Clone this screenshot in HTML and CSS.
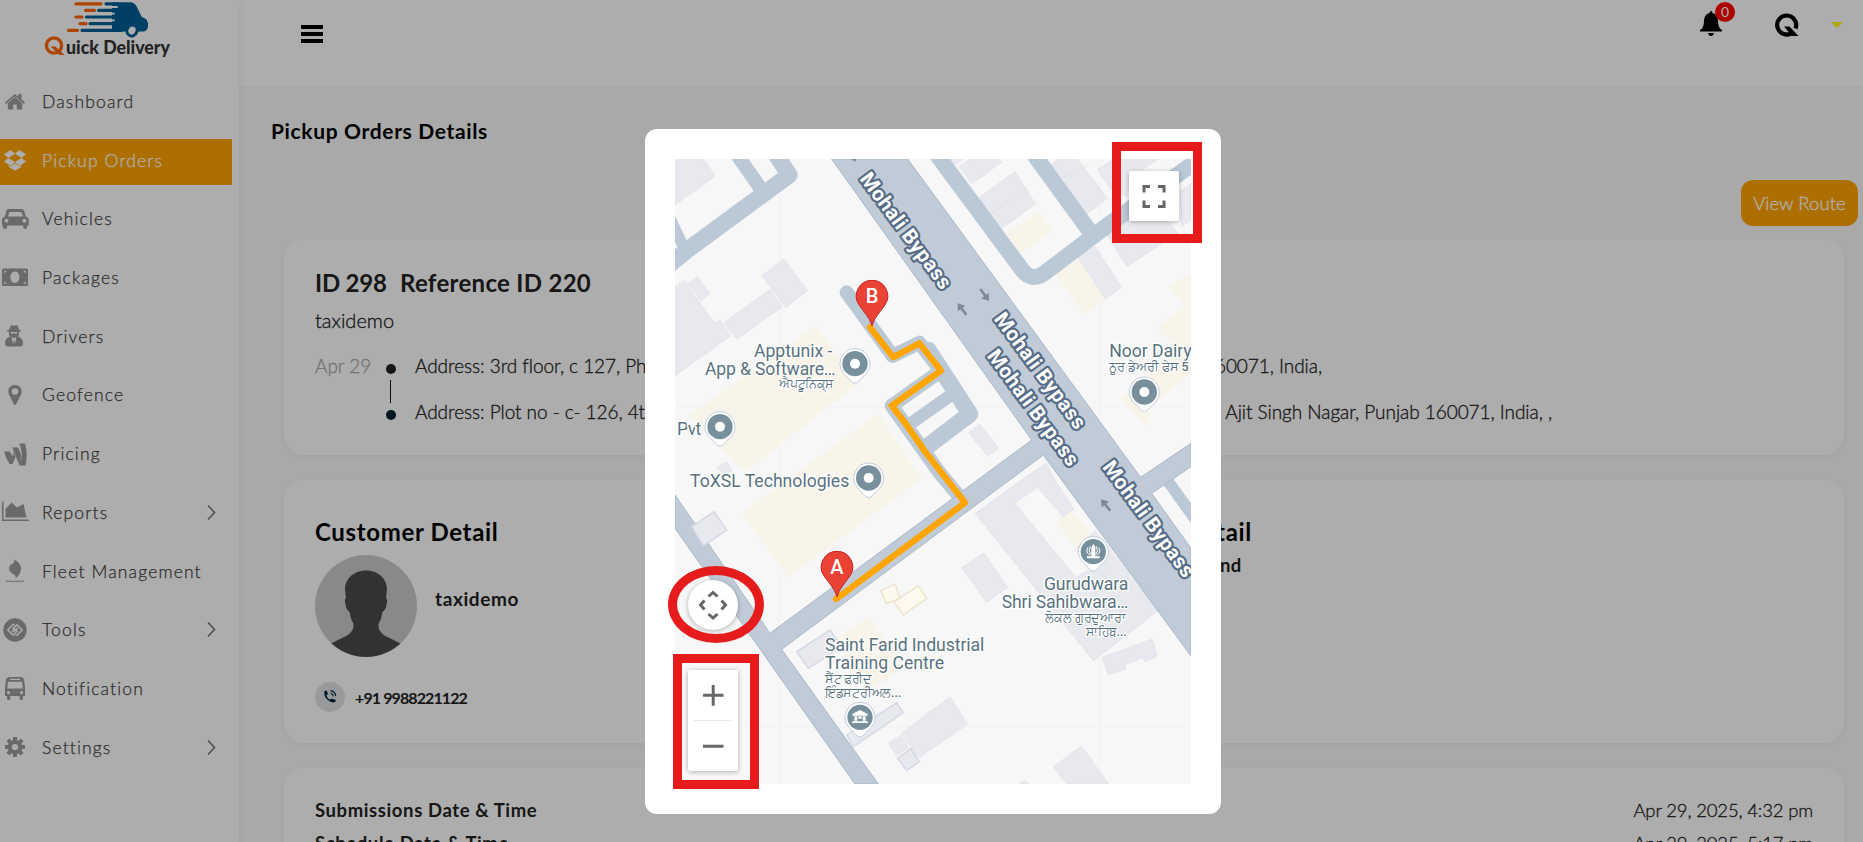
FILE: index.html
```html
<!DOCTYPE html>
<html lang="en">
<head>
    <meta charset="UTF-8">
    <meta name="viewport" content="width=device-width, initial-scale=1.0">
    <title>Quick Delivery - Pickup Orders Details</title>
    <link rel="stylesheet" href="styles.css">
</head>
<body>
    <div class="layout">
        <aside class="sidebar">
            <svg class="logo" viewBox="39 0 140 62">
                <path fill="#005f96" d="M112 2.200h19.500q4 .8 6 6l4 8.300 5 3q2 3 1.500 7t-4 5H112z"/>
                <g stroke="#fff" stroke-width="1.800" stroke-linecap="round"><path d="M106 7h11M106 13.700h8M106 20.300h8M106 27h3"/></g>
                <g stroke-width="3.200" stroke-linecap="round" fill="none">
                    <path stroke="#f60" d="M76 3.800h25M85.500 10.300h9M76 17h6M80 23.700h6M68.500 30.300h9"/>
                    <path stroke="#005f96" d="M106 3.800h12M98.500 10.300h20M86.500 17h30M90 23.700h28M82 30.300h40"/>
                </g>
                <ellipse cx="132" cy="30.500" rx="5" ry="5.500" fill="#fff" stroke="#005f96" stroke-width="3" transform="rotate(25 132 30.500)"/>
                <circle cx="54" cy="45.500" r="7.600" fill="none" stroke="#f60" stroke-width="3.400"/>
                <path d="M50.500 46.500h5l9 8.500h-5z" fill="#f60"/>
                <text class="logo-text" x="66" y="54" textLength="104" lengthAdjust="spacingAndGlyphs">uick Delivery</text>
            </svg>
            <nav class="menu">
                <a class="menu-item">
                    <svg class="menu-icon" viewBox="0 0 30 30"><path d="M15 10l7.200 6.200v6.200h-5.400v-5h-3.600v5H7.800v-6.200z"/><path d="M5 15.600l10-8.700 3.300 2.800V7h3.200v5.500l3.600 3.100-1.200 1.500L15 9.200l-8.900 7.900z"/></svg>
                    <span>Dashboard</span>
                </a>
                <a class="menu-item active">
                    <svg class="menu-icon" viewBox="0 0 30 30"><path d="M10.500 5l4.500 3.800-6.700 4.100L4 9.300zM19.500 5L15 8.800l6.700 4.100L26 9.300zM4 16.600l4.300-3.700L15 17l-4.500 3.900zM26 16.600l-4.300-3.700L15 17l4.500 3.900zM15 17.900l4.500 3.700 2-1.200v1.400l-6.500 4-6.500-4v-1.400l2 1.200z"/></svg>
                    <span>Pickup Orders</span>
                </a>
                <a class="menu-item">
                    <svg class="menu-icon" viewBox="0 0 30 30"><path fill-rule="evenodd" d="M8.500 5h13q2.200 0 2.700 2l1.500 5.500q3 .5 3 3.500v5.500h-1.500v1.700q0 1.800-2 1.800t-2-1.800v-1.700H7v1.700Q7 25 5 25t-2-1.800v-1.700H2V16q0-3 3-3.500L6.300 7q.5-2 2.200-2zM9.500 8L8 12.500h15L21.300 8zM6.500 14.800a2 2 0 100 4 2 2 0 000-4zM24.300 14.800a2 2 0 100 4 2 2 0 000-4z"/></svg>
                    <span>Vehicles</span>
                </a>
                <a class="menu-item">
                    <svg class="menu-icon" viewBox="0 0 30 30"><path fill-rule="evenodd" d="M3.500 5.500h23q1.500 0 1.500 1.500v14.500q0 1.500-1.500 1.500h-23Q2 23 2 21.500V7q0-1.500 1.500-1.500zM15 8.500c-6 0-6 11.500 0 11.500s6-11.500 0-11.500zM4.300 7.800v2.600l2.600-2.600zM25.700 7.800h-2.600l2.600 2.600zM4.300 20.700h2.600l-2.600-2.600zM25.700 20.700v-2.600l-2.600 2.600z"/></svg>
                    <span>Packages</span>
                </a>
                <a class="menu-item">
                    <svg class="menu-icon" viewBox="0 0 30 30"><path fill-rule="evenodd" d="M9.500 8.500q.8-4.500 2.200-4.500 1.500.8 2.400.8T16.500 4Q18 4 18.700 8.500 21 9 21 9.700q-1 1-2 1.100.5 3.200-1 4.700 5 1.500 5 6.500 0 3.500-3 3.500H8q-3 0-3-3.500 0-5 5-6.500-1.500-1.500-1-4.700-1.500-.1-2.300-1.100 0-.7 2.800-1.200zM10.500 11l.8 1.700h1.800l.9-1.200.9 1.200h1.800l.8-1.700zM11.500 16l1.500 7 1-4.500 1 4.500 1.500-7-2.500 1z"/></svg>
                    <span>Drivers</span>
                </a>
                <a class="menu-item">
                    <svg class="menu-icon" viewBox="0 0 30 30"><path fill-rule="evenodd" d="M15 5c-4 0-6.700 3-6.700 6.500 0 2 .7 3 1.500 4.500l4 8q1.200 1.800 2.400 0l4-8c.8-1.500 1.500-2.500 1.500-4.500C21.700 8 19 5 15 5zm0 3.200a3.300 3.300 0 110 6.600 3.300 3.300 0 010-6.600z"/></svg>
                    <span>Geofence</span>
                </a>
                <a class="menu-item">
                    <svg class="menu-icon" viewBox="0 0 30 30"><path d="M4 12.500h5.500l3.500 5 .5-5q-.5-3-1.500-4h6l4 9q-1-8-3-13h6q3 10 .5 22h-6l-4.500-9q0 3-2.500 7.500H9.500q-3.500-5-5.500-12.500z"/><path d="M12 9l7 16.500M19.500 4.500q3 8 1.500 17" stroke="#fff" stroke-width=".6" fill="none"/></svg>
                    <span>Pricing</span>
                </a>
                <a class="menu-item">
                    <svg class="menu-icon" viewBox="0 0 30 30"><path d="M2 4.500h1.500v18H29V24H2zM5.500 20.500v-8.500l6-6.500 5.500 5 6.500-3.500 3 13.500z"/></svg>
                    <span>Reports</span>
                    <svg class="chevron" viewBox="0 0 9 15"><path d="M1 .5l6.500 7L1 14.500"/></svg>
                </a>
                <a class="menu-item">
                    <svg class="menu-icon" viewBox="0 0 30 30"><path d="M14 3.500q7.500 4 7 9.500-.5 5.500-5.500 9.500.8-3-1.500-4-5-2.500-5-6 .2-3 3.500-4.700Q14.800 6.500 14 3.500zM6 24.700h18v1.100H6z"/></svg>
                    <span>Fleet Management</span>
                </a>
                <a class="menu-item">
                    <svg class="menu-icon" viewBox="0 0 30 30"><circle cx="15" cy="15" r="11.700"/><g fill="none" stroke="#fff" stroke-width="1.500"><path d="M14.500 10L13 9.500 7.800 15l5.200 5.200 4-4-2-2-3 3M15.500 20l1.500.3 5.200-5.300L17 9.800l-4 4 2 2 3-3"/></g></svg>
                    <span>Tools</span>
                    <svg class="chevron" viewBox="0 0 9 15"><path d="M1 .5l6.500 7L1 14.500"/></svg>
                </a>
                <a class="menu-item">
                    <svg class="menu-icon" viewBox="0 0 30 30"><path fill-rule="evenodd" d="M9 4h12q2.500 0 3 2.500l1 8.500v8h-2v2.500q0 1.500-1.700 1.500T19.600 25.500V23h-9.200v2.500Q10.400 27 8.700 27T7 25.500V23H5v-8l1-8.500Q6.500 4 9 4zM10 5.700v1.400h10V5.700zM8 8.700L7.300 15.500h15.400L22 8.700zM8.500 18a1.600 1.600 0 100 3.200 1.600 1.600 0 000-3.200zM21.500 18a1.600 1.600 0 100 3.200 1.600 1.600 0 000-3.200z"/></svg>
                    <span>Notification</span>
                </a>
                <a class="menu-item">
                    <svg class="menu-icon" viewBox="0 0 30 30"><circle cx="15" cy="15" r="5.200" fill="none" stroke="#9c9c9c" stroke-width="4.200"/><g fill="none" stroke="#9c9c9c" stroke-width="4"><path d="M15 5v4M15 21v4M5 15h4M21 15h4M7.900 7.900l2.900 2.900M19.200 19.200l2.900 2.900M7.900 22.100l2.900-2.900M19.200 10.800l2.900-2.900"/></g></svg>
                    <span>Settings</span>
                    <svg class="chevron" viewBox="0 0 9 15"><path d="M1 .5l6.500 7L1 14.500"/></svg>
                </a>
            </nav>
        </aside>

        <main class="main">
            <header class="topbar">
                <svg class="hamburger" viewBox="0 0 22 18"><path d="M0 0h22v4H0zM0 7h22v4H0zM0 14h22v4H0z"/></svg>
                <div class="topbar-right">
                    <div class="bell">
                        <svg viewBox="0 0 22 25"><path d="M11 0q1.300 0 1.500 2 5.500 1.500 5.500 8 0 7 4 9v1.500H0V19q4-2 4-9 0-6.500 5.500-8Q9.700 0 11 0zM8 22h6q-.5 3-3 3t-3-3z"/></svg>
                        <span class="badge">0</span>
                    </div>
                    <svg class="brand-q" viewBox="0 0 24 24"><path d="M17.500 19.500A9.500 9.500 0 1 1 20.500 15.500" fill="none" stroke="#000" stroke-width="4.200"/><path d="M9 13.500h5.500L23.500 23H17z"/></svg>
                    <span class="caret"></span>
                </div>
            </header>

            <section class="content">
                <h1>Pickup Orders Details</h1>
                <div class="actions"><button class="route-btn">View Route</button></div>

                <div class="card order-card">
                    <h2 class="order-title"><span class="order-id">ID 298</span><span class="order-ref">Reference ID 220</span></h2>
                    <p class="order-user">taxidemo</p>
                    <div class="stops">
                        <span class="stop-date">Apr 29</span>
                        <div class="track"><i class="dot"></i><i class="line"></i><i class="dot dark"></i></div>
                        <div class="addresses">
                            <div class="address first"><span>Address: 3rd floor, c 127, Phase 8,</span><span>Punjab 160071, India,</span></div>
                            <div class="address second"><span>Address: Plot no - c- 126, 4th floor,</span><span>Ajit Singh Nagar, Punjab 160071, India, ,</span></div>
                        </div>
                    </div>
                </div>

                <div class="card people-card">
                    <div class="customer">
                        <h2>Customer Detail</h2>
                        <div class="profile">
                            <svg class="avatar" viewBox="0 0 102 102">
                                <clipPath id="avatarClip"><circle cx="51" cy="51" r="51"/></clipPath>
                                <g clip-path="url(#avatarClip)"><path fill="#cbcbcb" d="M0 0h102v102H0z"/><path fill="#4b4b4b" d="M51 15.500c13 0 21 9 21 19l-1 8q2 3 .5 7-.5 5-4 7.500-1 7-4 12-1 7 6 11.500l22 11V102H10V91.500l22-11q7.500-4.500 6.500-11.500-3-5-4-12-3.500-2.500-4-7.500-1.500-4 .5-7l-1-8c0-10 8-19 21-19z"/></g>
                            </svg>
                            <span class="profile-name">taxidemo</span>
                        </div>
                        <div class="phone">
                            <span class="phone-icon"><svg viewBox="0 0 16 16"><path d="M1.500 2Q3-.5 4.500 1l1 3q0 1.500-1.500 2 .5 3 3.500 5 1.500-1.500 3-1l3.500 1q1.500 1-.5 2.700Q10 15.500 5.500 11.500T1.500 2z"/><path d="M8.500 1q5.500 0 6 6M8.500 4q3 0 3.300 3.300" fill="none" stroke="#002136" stroke-width="1.200"/></svg></span>
                            <span class="phone-number">+91 9988221122</span>
                        </div>
                    </div>
                    <div class="driver">
                        <h2>Driver Detail</h2>
                        <p>No driver found</p>
                    </div>
                </div>

                <div class="card dates-card">
                    <div class="date-row"><b>Submissions Date &amp; Time</b><span>Apr 29, 2025, 4:32 pm</span></div>
                    <div class="date-row"><b>Schedule Date &amp; Time</b><span>Apr 29, 2025, 5:17 pm</span></div>
                </div>
            </section>
        </main>
    </div>

    <div class="overlay">
        <div class="modal">
            <div class="map">
                <svg class="map-canvas" viewBox="105 117 1548 1875">
                    <path class="tile-line" d="M418 117V1992M1379 117V1992M105 862H1653M105 1822H1653"/>

                    <g class="beige">
                        <path d="M528 617L655 790 320 1052 285 1030 150 885z"/>
                        <path d="M708 885L725 900 845 1075 445 1372 305 1180z"/>
                        <path d="M590 1555L688 1490 785 1640 680 1720z"/>
                        <path d="M1100 340L1200 275 1235 332 1140 403z"/>
                        <path d="M1245 458L1310 415 1395 540 1332 585z"/>
                        <path d="M1590 500L1653 460V690L1653 760 1530 860 1522 920 1440 835 1620 700 1550 625 1635 560z"/>
                        <path d="M1248 1210L1285 1168 1360 1245 1310 1282z"/>
                    </g>
                    <g class="building">
                        <path d="M105 117H190L225 168 105 255z"/>
                        <path d="M365 467L432 417 503 512 437 563z"/>
                        <path d="M252 608L390 508 427 560 290 658z"/>
                        <path d="M143 490L172 470 210 520 183 542z"/>
                        <path d="M105 500L133 482 223 608 242 600 272 648 105 768z"/>
                        <path d="M230 1045L260 1025 278 1052 250 1060z"/>
                        <path d="M785 1838L930 1730 983 1812 840 1912 825 1905z"/>
                        <path d="M745 1870L785 1845 805 1885 768 1908z"/>
                        <path d="M958 140L990 117H1072L1085 127 995 192z"/>
                        <path d="M922 117H970L948 133z"/>
                        <path d="M1018 232L1125 155 1187 252 1075 333 1045 288z"/>
                        <path d="M1225 140L1255 117H1312L1403 235 1330 290z"/>
                        <path d="M1372 150L1420 117H1555L1470 175 1460 230 1410 205z"/>
                        <path d="M1400 345L1540 255 1615 340 1460 440z"/>
                        <path d="M1620 215L1653 190V300L1625 320z"/>
                        <path d="M1312 410L1365 380 1445 500 1397 538z"/>
                        <path d="M1005 1180L1218 1028 1225 1040 1248 1085 1302 1168 1270 1190 1192 1103 1125 1150 1307 1372 1420 1310 1555 1472 1360 1622z"/>
                        <path d="M1310 1285L1365 1232 1470 1365 1410 1385z"/>
                        <path d="M985 938L1020 912 1075 985 1043 1008z"/>
                        <path d="M965 1343L1032 1298 1103 1402 1040 1447z"/>
                        <path d="M1385 1612L1537 1557 1552 1610 1515 1625 1508 1612 1455 1635 1457 1648 1405 1665z"/>
                        <path d="M1240 1940L1325 1878 1406 1992H1280z"/>
                        <path d="M1138 1992L1157 1980 1166 1992z"/>
                    </g>
                    <path class="building-seam" d="M1045 288L1160 205M1250 180L1345 135"/>

                    <!-- minor streets -->
                    <g class="street">
                        <path stroke-width="50" d="M80 440L145 388 448 165 412 110"/>
                        <path stroke-width="42" d="M293 107L365 210"/>
                        <path stroke-width="34" d="M85 285L135 390"/>
                        <path stroke-width="48" d="M895 110L1145 448Q1175 488 1215 458L1400 318 1660 130"/>
                        <path stroke-width="48" d="M1185 108L1350 335"/>
                        <path stroke-width="42" d="M620 517L758 708 838 668 903 752 755 857 900 1060 975 1150"/>
                        <path stroke-width="50" d="M865 690L990 882 858 982"/>
                        <path stroke-width="38" d="M820 905L940 820"/>
                        <path stroke-width="34" d="M1585 1085L1665 1195"/>
                    </g>
                    <!-- main roads -->
                    <g class="road">
                        <path d="M105 1125L390 1540 1175 960 575 117H803L1502 1072 1653 970V1040L1535 1120 1653 1285V1608L1210 1005 425 1588 715 1992H645L105 1225z"/>
                    </g>
                    <path class="street-join" d="M1575 1100L1600 1082 1653 1155V1210z"/>
                    <g class="building outlined">
                        <path d="M155 1220L222 1175 260 1230 190 1278z"/>
                        <path d="M470 1595L570 1530 605 1580 505 1645z"/>
                        <path d="M620 1845L770 1748 790 1778 640 1880z"/>
                        <path d="M773 1915L812 1887 838 1925 800 1952z"/>
                    </g>
                    <g class="beige outlined">
                        <path d="M722 1412L765 1392 780 1435 740 1450zM762 1445L835 1398 860 1435 790 1485z"/>
                    </g>

                    <g class="road-arrow">
                        <path d="M-4-22H4V2H14L0 22-14 2H-4z" transform="translate(1034 525) rotate(-36)"/>
                        <path d="M-4-22H4V2H14L0 22-14 2H-4z" transform="translate(966 567) rotate(143)"/>
                        <path d="M-4-22H4V2H14L0 22-14 2H-4z" transform="translate(1397 1155) rotate(141)"/>
                        <path d="M634 117H648L646 125 640 122z"/>
                    </g>

                    <g class="road-name">
                        <text transform="translate(657 177) rotate(53.500)" textLength="417">Mohali Bypass</text>
                        <text transform="translate(1060 597) rotate(53.500)" textLength="417">Mohali Bypass</text>
                        <text transform="translate(1039 708) rotate(53.500)" textLength="417">Mohali Bypass</text>
                        <text transform="translate(1385 1042) rotate(53.500)" textLength="417">Mohali Bypass</text>
                    </g>

                    <path class="route" d="M690 622L760 712 838 670 903 752 755 857 800 915 855 995 975 1148 588 1437"/>

                    <defs>
                        <g id="poi">
                            <path class="poi-pin" d="M0-45A45 45 0 0 1 34 29L8 56Q0 62-8 56L-34 29A45 45 0 0 1 0-45z"/>
                            <circle class="poi-disc" r="38"/>
                        </g>
                        <path id="pin" d="M0-47A47 47 0 0 1 40 25C22 52 8 62 0 89C-8 62-22 52-40 25A47 47 0 0 1 0-47z"/>
                    </defs>
                    <use href="#poi" x="645" y="731"/><circle class="poi-dot" cx="645" cy="731" r="15"/>
                    <use href="#poi" x="240" y="920"/><circle class="poi-dot" cx="240" cy="920" r="15"/>
                    <use href="#poi" x="1513" y="816"/><circle class="poi-dot" cx="1513" cy="816" r="15"/>
                    <use href="#poi" x="686" y="1074"/><circle class="poi-dot" cx="686" cy="1074" r="15"/>
                    <use href="#poi" x="660" y="1792"/>
                    <path class="poi-dot" d="M637 1782L660 1770 683 1782V1787H637zM643 1789H652V1802H643zM668 1789H677V1802H668zM655 1789H665V1796H655zM637 1804H683V1809H637z"/>
                    <use href="#poi" x="1360" y="1295"/>
                    <path class="poi-dot" d="M1360 1272L1366 1281V1309H1379V1315H1341V1309H1354V1281z"/>
                    <path class="poi-arcs" d="M1351 1279Q1343 1293 1353 1304M1369 1279Q1377 1293 1367 1304M1344 1282Q1335 1298 1350 1306M1376 1282Q1385 1298 1370 1306"/>

                    <g class="place">
                        <text x="342" y="711" textLength="235">Apptunix -</text>
                        <text x="195" y="764" textLength="392">App &amp; Software…</text>
                        <text class="local" x="418" y="804" textLength="164" lengthAdjust="spacingAndGlyphs">ਐਪਟੂਨਿਕ੍ਸ</text>
                        <text x="111" y="946" textLength="73">Pvt</text>
                        <text x="150" y="1101" textLength="478">ToXSL Technologies</text>
                        <text x="1408" y="711" textLength="247">Noor Dairy</text>
                        <text class="local" x="1408" y="752" textLength="238" lengthAdjust="spacingAndGlyphs">ਨੂਰ ਡੇਅਰੀ ਫੇਸ 5</text>
                        <text x="1212" y="1411" textLength="253">Gurudwara</text>
                        <text x="1085" y="1464" textLength="380">Shri Sahibwara…</text>
                        <text class="local" x="1215" y="1506" textLength="243" lengthAdjust="spacingAndGlyphs">ਲੋਕਲ ਗੁਰਦੁਆਰਾ</text>
                        <text class="local" x="1337" y="1547" textLength="123" lengthAdjust="spacingAndGlyphs">ਸਾਹਿਬ...</text>
                        <text x="555" y="1593" textLength="478">Saint Farid Industrial</text>
                        <text x="555" y="1646" textLength="357">Training Centre</text>
                        <text class="local" x="555" y="1688" textLength="140" lengthAdjust="spacingAndGlyphs">ਸੈਂਟ ਫਰੀਦ</text>
                        <text class="local" x="555" y="1730" textLength="229" lengthAdjust="spacingAndGlyphs">ਇੰਡਸਟਰੀਅਲ...</text>
                    </g>

                    <g class="marker">
                        <use href="#pin" x="696" y="528"/><text x="696" y="548">B</text>
                        <use href="#pin" x="591" y="1341"/><text x="591" y="1361">A</text>
                    </g>
                </svg>

                <button class="map-btn fullscreen" aria-label="Toggle fullscreen view">
                    <svg viewBox="0 0 50 50"><path d="M21 15.500h-6v6M29 15.500h6v6M21 35.500h-6v-6M29 35.500h6v-6"/></svg>
                </button>
                <button class="map-btn camera" aria-label="Map camera controls">
                    <svg viewBox="0 0 50 50"><path d="M20.500 16.500l4.500-4 4.500 4M20.500 34l4.500 4 4.500-4M16.500 20.500l-4 4.500 4 4.500M33.500 20.500l4 4.500-4 4.500"/></svg>
                </button>
                <div class="map-btn zoom">
                    <svg viewBox="0 0 50 101"><path d="M15 25.300h20.500M25.200 15v20.800M15 76.200h20.500"/><path class="zoom-divider" d="M6 50.500h37"/></svg>
                </div>
            </div>
            <span class="highlight highlight-fullscreen"></span>
            <span class="highlight highlight-camera"></span>
            <span class="highlight highlight-zoom"></span>
        </div>
    </div>
</body>
</html>
```
FILE: styles.css
```css
* {
    box-sizing: border-box;
}
body {
    margin: 0;
    height: 842px;
    overflow: hidden;
    font-family: Lato, 'Open Sans', sans-serif;
    font-weight: 300;
    background: #f9f9f9;
    color: #222;
}
h1, h2, p {
    margin: 0;
}
button {
    border: 0;
    padding: 0;
    font-family: inherit;
}
.layout {
    display: flex;
    height: 842px;
    overflow: hidden;
}

/* sidebar */
.sidebar {
    width: 239px;
    flex: none;
    background: #fff;
    box-shadow: 0 0 10px rgba(0, 0, 0, 0.05);
    z-index: 1;
}
.logo {
    display: block;
    width: 140px;
    height: 62px;
    margin-left: 39px;
}
.logo-text {
    font-size: 18px;
    font-weight: 900;
    fill: #333;
}
.menu {
    padding-top: 18px;
    display: flex;
    flex-direction: column;
    gap: 12.7px;
}
.menu-item {
    display: flex;
    align-items: center;
    width: 232px;
    height: 46px;
    padding: 0 16px 3px 0;
    gap: 12px;
    font-size: 17.5px;
    letter-spacing: 1.15px;
    color: #444;
    -webkit-text-stroke: 0.25px currentColor;
}
.menu-item.active {
    background: #ffa500;
    color: #fff;
}
.menu-icon {
    width: 30px;
    height: 30px;
    fill: #9c9c9c;
}
.active .menu-icon {
    fill: #fff;
}
.chevron {
    width: 9px;
    height: 15px;
    margin-left: auto;
    fill: none;
    stroke: #777;
    stroke-width: 1.6;
}

/* top bar */
.main {
    flex: 1;
    min-width: 0;
}
.topbar {
    height: 86px;
    background: #fff;
    display: flex;
    justify-content: space-between;
    padding-left: 62px;
}
.hamburger {
    width: 22px;
    height: 18px;
    margin-top: 25px;
}
.topbar-right {
    display: flex;
    align-items: flex-start;
    padding-right: 20px;
}
.bell {
    position: relative;
    width: 22px;
    height: 25px;
    margin: 11px 53px 0 0;
}
.bell svg {
    width: 22px;
    height: 25px;
}
.badge {
    position: absolute;
    left: 15px;
    top: -9px;
    width: 20px;
    height: 20px;
    border-radius: 50%;
    background: #f00;
    color: #fff;
    font-size: 14px;
    font-weight: 400;
    line-height: 19px;
    text-align: center;
}
.brand-q {
    width: 24px;
    height: 24px;
    margin: 13px 32px 0 0;
}
.caret {
    margin-top: 22px;
    border: 6px solid transparent;
    border-top-color: #fefa0c;
    border-bottom: 0;
}

/* page */
.content {
    padding: 32px 19px 0 45px;
}
h1 {
    margin-left: -13px;
    font-size: 21px;
    line-height: 26px;
    font-weight: 700;
    letter-spacing: 0.65px;
    color: #000;
}
.actions {
    display: flex;
    justify-content: flex-end;
    margin: 36px -14px 13px 0;
}
.route-btn {
    width: 117px;
    height: 46px;
    border-radius: 12px;
    background: #ffa500;
    color: #fff;
    font-size: 18.5px;
    font-weight: 300;
    letter-spacing: 0.1px;
    -webkit-text-stroke: 0.3px currentColor;
}
.card {
    background: #fff;
    border-radius: 20px;
    padding: 0 31px;
    margin-bottom: 25px;
    box-shadow: 0 2px 4px rgba(0, 0, 0, 0.04);
}
.card h2 {
    font-size: 24px;
    line-height: 30px;
    font-weight: 700;
}
.order-card {
    height: 216px;
    padding-top: 29px;
}
.order-title {
    display: flex;
    gap: 14px;
    white-space: nowrap;
}
.order-id {
    width: 71px;
    letter-spacing: -0.2px;
}
.order-ref {
    letter-spacing: 0.3px;
}
.order-user {
    font-size: 20px;
    line-height: 24px;
    margin-top: 10px;
    -webkit-text-stroke: 0.3px currentColor;
}
.stops {
    display: flex;
    margin-top: 22px;
    font-size: 19px;
    -webkit-text-stroke: 0.3px currentColor;
}
.stop-date {
    width: 71px;
    line-height: 24px;
    color: #aaa;
}
.track {
    width: 29px;
    padding-top: 10px;
    display: flex;
    flex-direction: column;
}
.dot {
    width: 10px;
    height: 10px;
    border-radius: 50%;
    background: #222;
}
.dot.dark {
    background: #002136;
}
.line {
    width: 1px;
    height: 23px;
    margin: 6px 0 7px 4px;
    background: #111;
}
.address {
    display: flex;
    justify-content: space-between;
    line-height: 24px;
    margin-bottom: 22px;
    letter-spacing: -0.05px;
}
.address.first {
    width: 907px;
}
.address.second {
    width: 1137px;
}
.people-card {
    height: 263px;
    padding-top: 37px;
    display: flex;
}
.people-card h2 {
    color: #000;
    letter-spacing: 0.65px;
}
.customer {
    width: 792px;
}
.profile {
    display: flex;
    margin-top: 8px;
}
.avatar {
    width: 102px;
    height: 102px;
}
.profile-name {
    margin: 32px 0 0 18px;
    font-size: 19px;
    line-height: 24px;
    font-weight: 700;
    letter-spacing: 0.6px;
}
.phone {
    display: flex;
    align-items: center;
    gap: 10px;
    margin-top: 25px;
    font-size: 16px;
    font-weight: 700;
}
.phone-number {
    letter-spacing: -0.9px;
}
.phone-icon {
    width: 30px;
    height: 30px;
    border-radius: 50%;
    background: #dfe2e5;
    display: flex;
    align-items: center;
    justify-content: center;
}
.phone-icon svg {
    width: 14px;
    height: 14px;
    fill: #002136;
}
.driver p {
    font-size: 18.5px;
    line-height: 24px;
    font-weight: 700;
    letter-spacing: 0.3px;
    margin-top: 6px;
}
.dates-card {
    height: 263px;
    padding-top: 29px;
}
.date-row {
    display: flex;
    justify-content: space-between;
    height: 33px;
    line-height: 26px;
    font-size: 18.5px;
}
.date-row b {
    font-weight: 700;
    letter-spacing: 0.6px;
}
.date-row span {
    letter-spacing: -0.15px;
    -webkit-text-stroke: 0.3px currentColor;
}

/* route modal */
.overlay {
    position: fixed;
    inset: 0;
    z-index: 10;
    background: rgba(0, 0, 0, 0.32);
    display: flex;
    justify-content: center;
    align-items: flex-start;
    padding: 129px 0 0 3px;
}
.modal {
    position: relative;
    width: 576px;
    height: 685px;
    padding: 30px;
    border-radius: 12px;
    background: #fff;
}
.map {
    position: relative;
    width: 516px;
    height: 625px;
    background: #f7f7f7;
}
.map-canvas {
    display: block;
    width: 516px;
    height: 625px;
    font-family: Roboto, 'Noto Sans', sans-serif;
}
.tile-line {
    stroke: #f1f2f3;
    stroke-width: 3;
}
.building {
    fill: #e8e9ee;
    stroke: #dcdde6;
    stroke-width: 1.5;
}
.building-seam {
    stroke: #dcdde6;
    stroke-width: 2;
}
.building.outlined {
    stroke: #d5d7e2;
    stroke-width: 4;
}
.beige {
    fill: #f9f4e9;
}
.beige.outlined {
    fill: #fdf9ee;
    stroke: #ece2cb;
    stroke-width: 4;
}
.street {
    fill: none;
    stroke: #bbc9d6;
    stroke-linecap: round;
    stroke-linejoin: round;
}
.street-join {
    fill: #bbc9d6;
}
.road {
    fill: #c1cbd8;
    stroke: #aab9c8;
    stroke-width: 3;
}
.road-arrow {
    fill: #808995;
}
.road-name {
    font-size: 62px;
    font-weight: 700;
    fill: #fff;
    stroke: #566b86;
    stroke-width: 13;
    stroke-linejoin: round;
    paint-order: stroke;
}
.route {
    fill: none;
    stroke: #ffa500;
    stroke-width: 19;
    stroke-linecap: round;
    stroke-linejoin: round;
}
.poi-pin {
    fill: #fff;
    stroke: #c3ccdc;
    stroke-width: 3;
}
.poi-disc {
    fill: #78909c;
}
.poi-dot {
    fill: #fff;
}
.poi-arcs {
    fill: none;
    stroke: #fff;
    stroke-width: 3;
}
.place {
    font-size: 53px;
    font-weight: 400;
    fill: #587280;
    stroke: #fff;
    stroke-width: 8;
    stroke-linejoin: round;
    paint-order: stroke;
}
.local {
    font-size: 38px;
    font-weight: 500;
}
.marker {
    fill: #ea4335;
    stroke: #c5221f;
    stroke-width: 3;
}
.marker text {
    font-size: 60px;
    font-weight: 500;
    text-anchor: middle;
    fill: #fff;
    stroke: none;
}
.map-btn {
    position: absolute;
    width: 50px;
    height: 50px;
    background: #fff;
    border-radius: 2px;
    box-shadow: 0 1px 5px rgba(0, 0, 0, 0.3);
}
.map-btn svg {
    display: block;
    fill: none;
    stroke: #666;
    stroke-width: 3;
}
.fullscreen {
    left: 454px;
    top: 12px;
}
.camera {
    left: 13px;
    top: 421px;
    border-radius: 50%;
}
.zoom {
    left: 13px;
    top: 511px;
    height: 101px;
}
.map-btn .zoom-divider {
    stroke: #e6e6e6;
    stroke-width: 1;
}
.highlight {
    position: absolute;
    border: 9px solid #e61c1c;
}
.highlight-fullscreen {
    left: 467px;
    top: 13px;
    width: 90px;
    height: 101px;
}
.highlight-camera {
    left: 23px;
    top: 437px;
    width: 96px;
    height: 77px;
    border-radius: 50%;
}
.highlight-zoom {
    left: 28px;
    top: 525px;
    width: 86px;
    height: 135px;
}
```
